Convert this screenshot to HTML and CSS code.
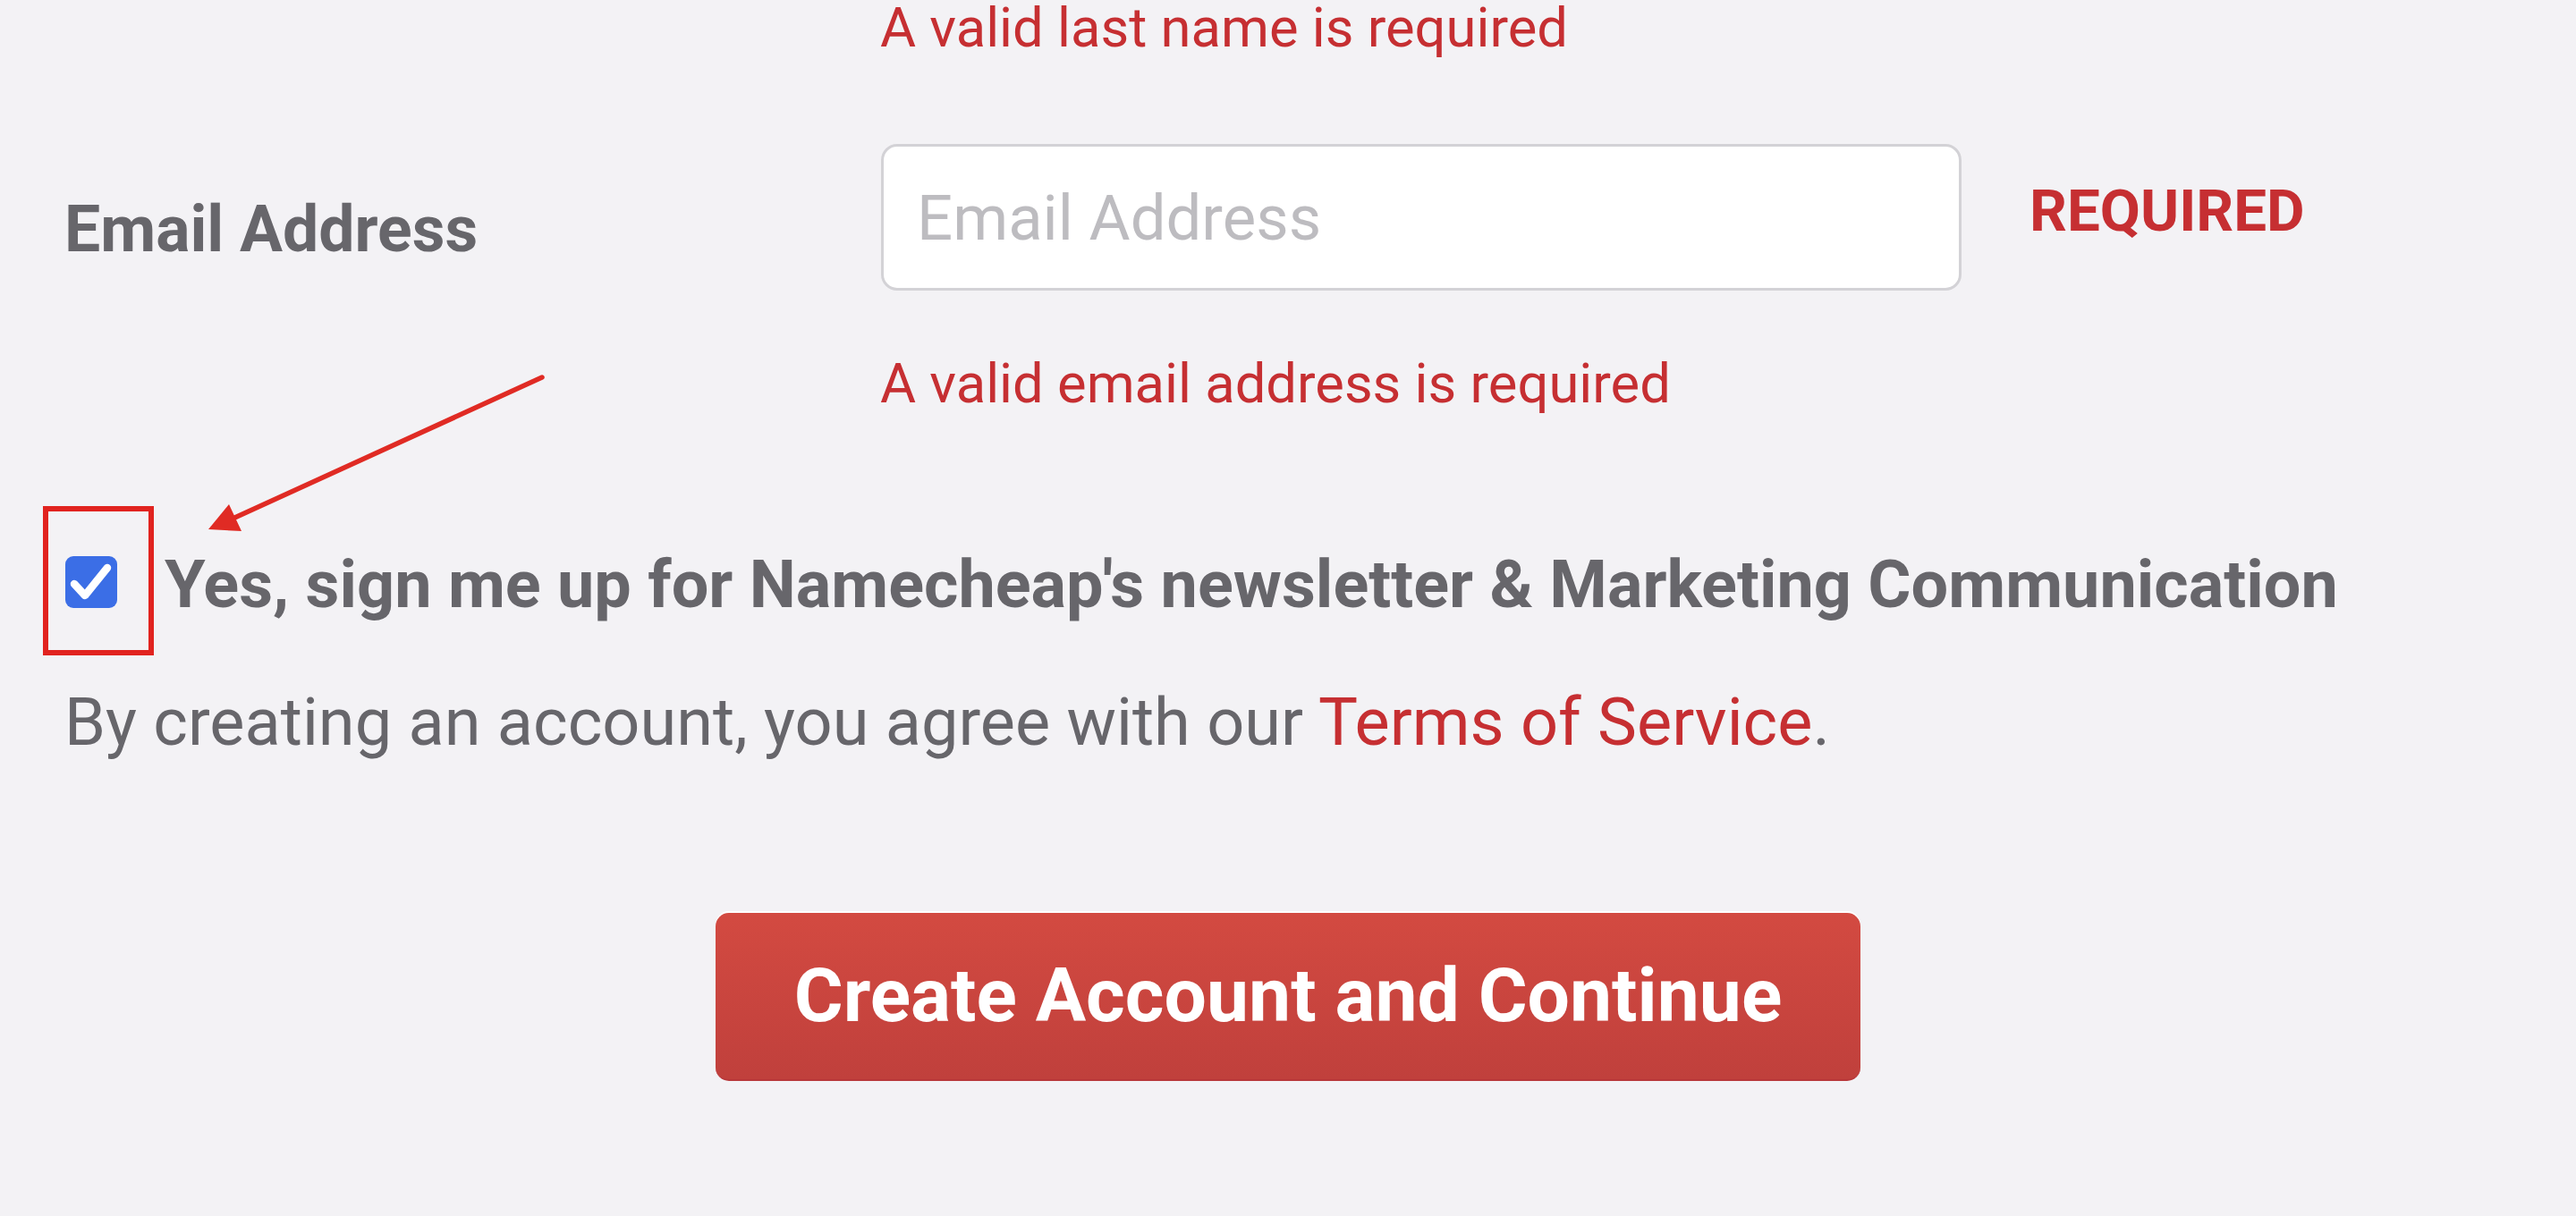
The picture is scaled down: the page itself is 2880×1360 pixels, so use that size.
FILE: index.html
```html
<!DOCTYPE html>
<html lang="en">
<head>
<meta charset="utf-8">
<title>Create Account</title>
<link rel="stylesheet" href="styles.css">
</head>
<body>
<div class="page">
  <form class="form">
    <p class="error error-top">A valid last name is required</p>
    <div class="field-row">
      <label class="field-label" for="email">Email Address</label>
      <input class="field-input" id="email" type="text" placeholder="Email Address">
      <span class="required">REQUIRED</span>
    </div>
    <p class="error error-email">A valid email address is required</p>
    <label class="newsletter">
      <span class="checkbox">
        <svg class="checkmark" viewBox="0 0 58 58" width="58" height="58" aria-hidden="true">
          <polyline points="10,31 22,44 47,13" fill="none" stroke="#ffffff" stroke-width="8.5" stroke-linecap="round" stroke-linejoin="round"/>
        </svg>
      </span>
      <span class="newsletter-text">Yes, sign me up for Namecheap's newsletter &amp; Marketing Communication</span>
    </label>
    <p class="terms">By creating an account, you agree with our <a class="terms-link" href="#">Terms of Service</a>.</p>
  </form>
  <div class="actions">
    <button class="btn-primary" type="button">Create Account and Continue</button>
  </div>
  <svg class="annotation" viewBox="0 0 2880 1360" width="2880" height="1360" aria-hidden="true">
    <rect x="51" y="569" width="118" height="161" fill="none" stroke="#e1231f" stroke-width="6"/>
    <line x1="606" y1="422" x2="258" y2="581" stroke="#e02b24" stroke-width="5.5" stroke-linecap="round"/>
    <polygon points="233,592 256,564 270,594" fill="#e02b24"/>
  </svg>
</div>
</body>
</html>
```
FILE: styles.css
```css
html, body {
  margin: 0;
  padding: 0;
  background: #f3f2f5;
}

body {
  font-family: Roboto, "Liberation Sans", sans-serif;
  color: #67666b;
}

.page {
  position: relative;
  width: 2880px;
  height: 1360px;
  overflow: hidden;
}

.form {
  margin: 0;
  padding: 1px 0 0 72px;
  display: flex;
  flex-direction: column;
  align-items: flex-start;
}

.error {
  margin: 0 0 0 912px;
  font-size: 61.5px;
  line-height: 1;
  font-weight: 400;
  color: #c62f32;
}

.error-top {
  margin-top: 0;
}

.field-row {
  margin-top: 98.5px;
  display: grid;
  grid-template-columns: 913px 1208px auto;
  align-items: start;
}

.field-label {
  margin-top: 60px;
  font-size: 71.5px;
  line-height: 1;
  font-weight: 700;
  color: #67666b;
}

.field-input {
  box-sizing: border-box;
  width: 1208px;
  height: 164px;
  margin: 0;
  padding: 0 0 0 37px;
  border: 3px solid #d3d2d6;
  border-radius: 18px;
  background: #ffffff;
  font-family: Roboto, "Liberation Sans", sans-serif;
  font-size: 70.7px;
  color: #67666b;
  outline: none;
}

.field-input::placeholder {
  color: #bdbcc0;
}

.required {
  margin: 41.8px 0 0 76px;
  font-size: 65.5px;
  line-height: 1;
  font-weight: 700;
  color: #c62f32;
}

.error-email {
  margin-top: 74.2px;
}

.newsletter {
  margin-top: 157.2px;
  display: flex;
  align-items: flex-start;
}

.checkbox {
  box-sizing: border-box;
  width: 58px;
  height: 58px;
  margin: 4px 53px 0 1px;
  border-radius: 9px;
  background: #3b6ee6;
  display: flex;
}

.checkmark {
  display: block;
}

.newsletter-text {
  font-size: 73.8px;
  line-height: 1;
  font-weight: 700;
  color: #67666b;
}

.terms {
  margin: 79.1px 0 0 0;
  font-size: 73.9px;
  line-height: 1;
  font-weight: 400;
  color: #67666b;
}

.terms-link {
  color: #c62f32;
  text-decoration: none;
}

.actions {
  margin-top: 176.3px;
  display: flex;
  justify-content: center;
}

.btn-primary {
  box-sizing: border-box;
  width: 1280px;
  height: 188px;
  margin: 0;
  padding: 0;
  border: none;
  border-bottom: 2px solid #b8373a;
  border-radius: 15px;
  background: linear-gradient(#d34a41, #c0403c);
  box-shadow: 0 -2px 0 #ffffff;
  color: #ffffff;
  font-family: Roboto, "Liberation Sans", sans-serif;
  font-size: 84px;
  line-height: 1;
  font-weight: 700;
  display: flex;
  align-items: center;
  justify-content: center;
}

.annotation {
  position: absolute;
  top: 0;
  left: 0;
  pointer-events: none;
}
```
